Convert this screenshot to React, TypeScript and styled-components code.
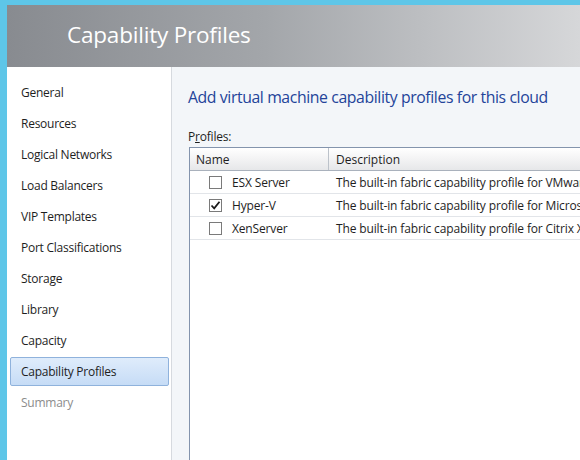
import styled, { createGlobalStyle } from "styled-components";

const GlobalStyle = createGlobalStyle`
  html, body {
    margin: 0;
    padding: 0;
    background: #ffffff;
  }
  body {
    font-family: "Open Sans", "Noto Sans", sans-serif;
    color: #1e1e1e;
  }
`;

const navItems = [
  "General",
  "Resources",
  "Logical Networks",
  "Load Balancers",
  "VIP Templates",
  "Port Classifications",
  "Storage",
  "Library",
  "Capacity",
  "Capability Profiles",
  "Summary",
];

const profiles = [
  {
    name: "ESX Server",
    checked: false,
    desc: "The built-in fabric capability profile for VMware ESX Server",
  },
  {
    name: "Hyper-V",
    checked: true,
    desc: "The built-in fabric capability profile for Microsoft Hyper-V",
  },
  {
    name: "XenServer",
    checked: false,
    desc: "The built-in fabric capability profile for Citrix XenServer",
  },
];

const App = () => {
  return (
    <>
      <GlobalStyle />
      <Window>
        <Header>
          <HeaderTitle>Capability Profiles</HeaderTitle>
        </Header>
        <Body>
          <Sidebar>
            {navItems.map((label) => (
              <NavItem
                key={label}
                $active={label === "Capability Profiles"}
                $disabled={label === "Summary"}
              >
                {label}
              </NavItem>
            ))}
          </Sidebar>
          <Content>
            <PageTitle>Add virtual machine capability profiles for this cloud</PageTitle>
            <FieldLabel>
              P<u>r</u>ofiles:
            </FieldLabel>
            <Grid>
              <HeaderRow>
                <NameHead>Name</NameHead>
                <DescHead>Description</DescHead>
              </HeaderRow>
              {profiles.map((p) => (
                <Row key={p.name}>
                  <NameCell>
                    <CheckBox>
                      {p.checked && (
                        <svg width="11" height="11" viewBox="0 0 11 11">
                          <path
                            d="M1.5 5.5 L4.2 8.3 L9.5 1.8"
                            fill="none"
                            stroke="#1a1a1a"
                            strokeWidth="1.8"
                          />
                        </svg>
                      )}
                    </CheckBox>
                    {p.name}
                  </NameCell>
                  <DescCell>{p.desc}</DescCell>
                </Row>
              ))}
            </Grid>
          </Content>
        </Body>
      </Window>
    </>
  );
};

const Window = styled.div`
  width: 580px;
  height: 460px;
  box-sizing: border-box;
  border-top: 5px solid #5ec6e8;
  border-left: 7px solid #5ec6e8;
  display: flex;
  flex-direction: column;
  overflow: hidden;
`;

const Header = styled.div`
  height: 62px;
  flex: none;
  display: flex;
  align-items: center;
  padding-left: 60px;
  background: linear-gradient(to right, #888b90 0%, #a3a6aa 45%, #d6d7d9 100%);
`;

const HeaderTitle = styled.div`
  color: #ffffff;
  font-size: 22.5px;
  letter-spacing: -0.2px;
  margin-top: -4px;
`;

const Body = styled.div`
  flex: 1;
  display: flex;
  min-height: 0;
`;

const Sidebar = styled.div`
  width: 165px;
  flex: none;
  box-sizing: border-box;
  background: #ffffff;
  border-right: 1px solid #d6dadf;
  padding: 11px 2px 0 3px;
  display: flex;
  flex-direction: column;
  gap: 2px;
`;

const NavItem = styled.div<{ $active?: boolean; $disabled?: boolean }>`
  height: 29px;
  box-sizing: border-box;
  display: flex;
  align-items: center;
  padding-left: 10px;
  font-size: 12px;
  letter-spacing: -0.25px;
  border-radius: 2px;
  border: 1px solid ${(p) => (p.$active ? "#8fb2dc" : "transparent")};
  background: ${(p) =>
    p.$active ? "linear-gradient(to bottom, #dfecfb 0%, #c6dcf6 100%)" : "transparent"};
  color: ${(p) => (p.$disabled ? "#8c8c8c" : "#1e1e1e")};
`;

const Content = styled.div`
  flex: 1;
  min-width: 0;
  background: #f3f6f9;
  padding: 17px 0 0 16px;
  overflow: hidden;
`;

const PageTitle = styled.div`
  font-size: 15.8px;
  color: #23449a;
  white-space: nowrap;
  letter-spacing: -0.4px;
  height: 26px;
  line-height: 26px;
`;

const FieldLabel = styled.div`
  margin-top: 19px;
  font-size: 12px;
  line-height: 16px;
  height: 16px;
  margin-bottom: 2px;
  letter-spacing: -0.2px;
`;

const Grid = styled.div`
  margin-left: 1px;
  width: 520px;
  height: 320px;
  background: #ffffff;
  border-top: 1px solid #8394ad;
  border-left: 1px solid #8394ad;
`;

const HeaderRow = styled.div`
  display: flex;
  height: 22px;
  background: linear-gradient(to bottom, #ffffff 0%, #f3f3f4 50%, #e6e7e9 100%);
  border-bottom: 1px solid #a9b1bc;
`;

const NameHead = styled.div`
  width: 139px;
  flex: none;
  border-right: 1px solid #bcc2ca;
  padding-left: 6px;
  box-sizing: border-box;
  display: flex;
  align-items: center;
  font-size: 12px;
`;

const DescHead = styled.div`
  flex: 1;
  padding-left: 7px;
  display: flex;
  align-items: center;
  font-size: 12px;
`;

const Row = styled.div`
  display: flex;
  height: 22px;
  border-bottom: 1px solid #e2e5e9;
  font-size: 12px;
  letter-spacing: -0.15px;
  white-space: nowrap;
`;

const NameCell = styled.div`
  width: 139px;
  flex: none;
  box-sizing: border-box;
  padding-left: 19px;
  display: flex;
  align-items: center;
  gap: 10px;
`;

const DescCell = styled.div`
  flex: 1;
  padding-left: 7px;
  display: flex;
  align-items: center;
`;

const CheckBox = styled.div`
  width: 13px;
  height: 13px;
  box-sizing: border-box;
  border: 1px solid #7a7a7a;
  background: #ffffff;
  display: flex;
  align-items: center;
  justify-content: center;
`;

export default App;
